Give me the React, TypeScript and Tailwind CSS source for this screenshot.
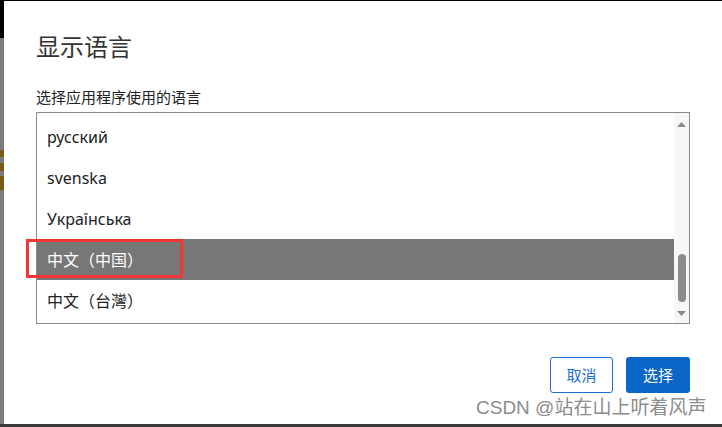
import React from "react";

const languages = [
  { label: "русский", selected: false },
  { label: "svenska", selected: false },
  { label: "Українська", selected: false },
  { label: "中文（中国）", selected: true },
  { label: "中文（台灣）", selected: false },
];

const font = "font-['Noto_Sans','Noto_Sans_CJK_SC',sans-serif]";

function Scrollbar() {
  return (
    <div className="w-[15px] bg-[#f7f7f7] flex flex-col items-center">
      <svg width="9" height="6" viewBox="0 0 9 6" className="mt-[9px]">
        <path d="M0 5 L4.5 0 L9 5 Z" fill="#8a8a8a" />
      </svg>
      <div className="flex-1" />
      <div className="w-[8px] h-[48px] rounded-full bg-[#8c8c8c] mb-[8px]" />
      <svg width="9" height="6" viewBox="0 0 9 6" className="mb-[7px]">
        <path d="M0 1 L4.5 6 L9 1 Z" fill="#8a8a8a" />
      </svg>
    </div>
  );
}

export default function App() {
  return (
    <div className={`w-[722px] h-[427px] flex flex-col bg-white overflow-hidden relative ${font}`}>
      <div className="h-[1px] bg-black" />
      <div className="flex flex-1">
        {/* page behind the dialog */}
        <div className="w-[4px] flex flex-col">
          <div className="h-[37px] bg-black" />
          <div className="flex-1 bg-[#7b7b7b] flex flex-col">
            <div className="h-[112px]" />
            <div className="h-[7px] bg-[#7a5b16]" />
            <div className="h-[6px]" />
            <div className="h-[8px] bg-[#7a5b16]" />
            <div className="h-[5px]" />
            <div className="h-[14px] bg-[#7a5b16]" />
          </div>
        </div>

        <div className="flex-1 flex flex-col pl-[32px] pr-[32px]">
          <h1 className="mt-[30px] text-[24px] leading-[32px] text-[#333] font-normal">显示语言</h1>
          <div className="mt-[24px] text-[15px] leading-[20px] text-[#222]">选择应用程序使用的语言</div>

          <div className="mt-[5px] h-[212px] border border-[#8a8a8a] flex">
            <div className="flex-1 flex flex-col pt-[3px]">
              {languages.map((lang) => (
                <div
                  key={lang.label}
                  className={`h-[41px] flex items-center pl-[10px] text-[16px] ${
                    lang.selected ? "bg-[#777777] text-white" : "text-[#222]"
                  }`}
                >
                  {lang.label}
                </div>
              ))}
            </div>
            <Scrollbar />
          </div>

          <div className="mt-[33px] flex justify-end gap-[13px]">
            <button className="w-[63px] h-[36px] rounded-[3px] border border-[#1a6fd0] text-[#1a6fd0] text-[15px] bg-white">
              取消
            </button>
            <button className="w-[64px] h-[36px] rounded-[3px] bg-[#0b66c8] text-white text-[15px]">
              选择
            </button>
          </div>
        </div>
      </div>
      <div className="h-[3px] bg-[#3a3a3a]" />

      {/* annotation box */}
      <div className="absolute left-[26px] top-[239px] w-[157px] h-[39px] border-[3px] border-[#f23535]" />

      {/* watermark */}
      <div className="absolute left-[476px] top-[396px] text-[19px] leading-[24px] text-[#8c8c8c] whitespace-nowrap font-['Liberation_Sans','Noto_Sans_CJK_SC',sans-serif]">
        CSDN @站在山上听着风声
      </div>
    </div>
  );
}
